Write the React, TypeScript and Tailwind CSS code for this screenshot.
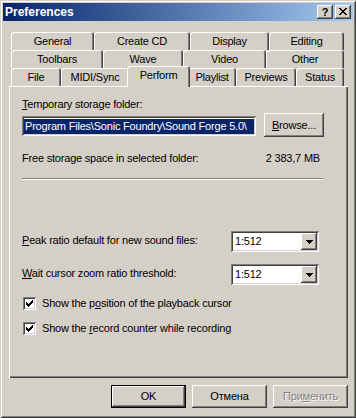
import type { ReactNode } from 'react'
import { clsx } from 'clsx'

// Classic Windows 2000 bevels
const RAISED =
  'bg-[#d4d0c8] shadow-[inset_-1px_-1px_#404040,inset_1px_1px_#ffffff,inset_-2px_-2px_#808080]'
const SUNKEN =
  'bg-white shadow-[inset_1px_1px_#808080,inset_-1px_-1px_#ffffff,inset_2px_2px_#404040,inset_-2px_-2px_#d4d0c8]'
const TAB_EDGE =
  'rounded-t-[3px] shadow-[inset_1px_1px_#ffffff,inset_-1px_0_#404040,inset_-2px_0_#808080]'

const TAB_ROWS = [
  [
    { label: 'General', w: 'w-[83px]' },
    { label: 'Create CD', w: 'w-[96px]' },
    { label: 'Display', w: 'w-[79px]' },
    { label: 'Editing', w: 'w-[75px]' },
  ],
  [
    { label: 'Toolbars', w: 'w-[92px]' },
    { label: 'Wave', w: 'w-[80px]' },
    { label: 'Video', w: 'w-[83px]' },
    { label: 'Other', w: 'w-[78px]' },
  ],
  [
    { label: 'File', w: 'w-[50px]' },
    { label: 'MIDI/Sync', w: 'w-[68px]' },
    { label: 'Perform', w: 'w-[63px]', active: true },
    { label: 'Playlist', w: 'w-[48px]' },
    { label: 'Previews', w: 'w-[60px]' },
    { label: 'Status', w: 'w-[48px]' },
  ],
]

// pixel glyphs, drawn 1px per cell
const pixelPath = (rows: string[]) =>
  rows
    .flatMap((row, y) =>
      row.split('').map((c, x) => (c === 'x' ? `M${x} ${y}h1v1h-1z` : '')),
    )
    .join('')

const CLOSE_GLYPH = ['xx....xx', '.xx..xx.', '..xxxx..', '...xx...', '..xxxx..', '.xx..xx.', 'xx....xx']
const CHECK_GLYPH = ['......x', '.....xx', 'x...xxx', 'xx.xxx.', 'xxxxx..', '.xxx...', '..x....']
const ARROW_GLYPH = ['xxxxxxx', '.xxxxx.', '..xxx..', '...x...']

const Pixels = ({ rows, className }: { rows: string[]; className?: string }) => (
  <svg
    width={rows[0].length}
    height={rows.length}
    viewBox={`0 0 ${rows[0].length} ${rows.length}`}
    shapeRendering="crispEdges"
    className={className}
  >
    <path d={pixelPath(rows)} fill="#000000" />
  </svg>
)

const U = ({ children }: { children: ReactNode }) => (
  <span className="underline underline-offset-[1px]">{children}</span>
)

const Combo = ({ value }: { value: string }) => (
  <div className={clsx(SUNKEN, 'mr-[5px] flex h-[21px] w-[88px] items-center p-[2px]')}>
    <span className="flex-1 pl-[2px] leading-[13px]">{value}</span>
    <div className={clsx(RAISED, 'flex h-[17px] w-[16px] items-center justify-center')}>
      <Pixels rows={ARROW_GLYPH} />
    </div>
  </div>
)

const Check = ({ children }: { children: ReactNode }) => (
  <div className="flex h-[13px] items-center gap-[6px] pl-[1px]">
    <div className={clsx(SUNKEN, 'flex h-[13px] w-[13px] items-center justify-center')}>
      <Pixels rows={CHECK_GLYPH} />
    </div>
    <span className="leading-[13px]">{children}</span>
  </div>
)

const DialogButton = ({
  children,
  isDefault,
  disabled,
  className = 'w-[75px]',
}: {
  children: ReactNode
  isDefault?: boolean
  disabled?: boolean
  className?: string
}) => (
  <div
    className={clsx(
      'flex h-[23px] items-center justify-center',
      className,
      isDefault
        ? 'bg-[#d4d0c8] shadow-[inset_0_0_0_1px_#000000,inset_-2px_-2px_#404040,inset_2px_2px_#ffffff,inset_-3px_-3px_#808080]'
        : RAISED,
      disabled && 'text-[#808080] [text-shadow:1px_1px_0_#ffffff]',
    )}
  >
    {children}
  </div>
)

export default function App() {
  return (
    <div className="flex h-[418px] w-[356px] flex-col bg-[#d4d0c8] p-[3px] font-['Liberation_Sans',Arial,sans-serif] text-[11px] tracking-[-0.2px] text-black shadow-[inset_1px_1px_#d4d0c8,inset_-1px_-1px_#404040,inset_2px_2px_#ffffff,inset_-2px_-2px_#808080]">
      {/* title bar */}
      <div className="flex h-[18px] items-center bg-gradient-to-r from-[#0a246a] to-[#a6caf0] pl-[2px] pr-[2px]">
        <span className="flex-1 text-[12px] font-bold leading-[14px] tracking-[0px] text-white">Preferences</span>
        <div className={clsx(RAISED, 'mr-[2px] flex h-[14px] w-[16px] items-center justify-center')}>
          <span className="text-[11px] font-bold leading-[11px] tracking-[0px]">?</span>
        </div>
        <div className={clsx(RAISED, 'flex h-[14px] w-[16px] items-center justify-center pb-[1px]')}>
          <Pixels rows={CLOSE_GLYPH} />
        </div>
      </div>

      <div className="ml-[6px] mt-[11px] flex w-[339px] flex-col">
        {/* tab strip */}
        <div className="ml-[2px] flex flex-col">
          {TAB_ROWS.map((row, i) => (
            <div key={i} className="flex h-[18px] items-start">
              {row.map((tab) =>
                tab.active ? (
                  <div
                    key={tab.label}
                    className={clsx(
                      TAB_EDGE,
                      tab.w,
                      'relative z-10 -mx-[2px] -mt-[2px] flex h-[21px] justify-center bg-[#d4d0c8] pt-[3px] leading-[13px]',
                    )}
                  >
                    {tab.label}
                  </div>
                ) : (
                  <div
                    key={tab.label}
                    className={clsx(TAB_EDGE, tab.w, 'flex h-[18px] items-center justify-center leading-[13px]')}
                  >
                    {tab.label}
                  </div>
                ),
              )}
            </div>
          ))}
        </div>

        {/* Perform page */}
        <div className="flex h-[292px] flex-col pl-[13px] pt-[12px] shadow-[inset_1px_1px_#ffffff,inset_-1px_-1px_#404040,inset_-2px_-2px_#808080]">
          <div className="flex w-[302px] flex-col">
            <span className="leading-[13px]">
              <U>T</U>emporary storage folder:
            </span>

            <div className="mt-[2px] flex h-[24px] items-center justify-between">
              <div className={clsx(SUNKEN, 'mt-[2px] flex h-[20px] w-[234px] items-center overflow-hidden px-[2px]')}>
                <span className="h-[15px] w-full whitespace-nowrap bg-[#0a246a] pl-[1px] leading-[15px] text-white">
                  Program Files\Sonic Foundry\Sound Forge 5.0\
                </span>
              </div>
              <DialogButton className="h-[24px] w-[60px]">
                <span>
                  <U>B</U>rowse...
                </span>
              </DialogButton>
            </div>

            <div className="mt-[15px] flex justify-between pr-[4px] leading-[13px]">
              <span>Free storage space in selected folder:</span>
              <span>2 383,7 MB</span>
            </div>

            <div className="mt-[13px] h-[2px] w-[301px] border-t border-b border-t-[#808080] border-b-white" />

            <div className="mt-[51px] flex items-center justify-between">
              <span className="-mt-[2px] leading-[13px]">
                <U>P</U>eak ratio default for new sound files:
              </span>
              <Combo value="1:512" />
            </div>

            <div className="mt-[12px] flex items-center justify-between">
              <span className="-mt-[2px] leading-[13px]">
                <U>W</U>ait cursor zoom ratio threshold:
              </span>
              <Combo value="1:512" />
            </div>

            <div className="mt-[12px] flex flex-col gap-[12px]">
              <Check>
                Show the p<U>o</U>sition of the playback cursor
              </Check>
              <Check>
                Show the <U>r</U>ecord counter while recording
              </Check>
            </div>
          </div>
        </div>

        {/* dialog buttons */}
        <div className="mt-[7px] flex justify-end gap-[6px]">
          <DialogButton isDefault>OK</DialogButton>
          <DialogButton>Отмена</DialogButton>
          <DialogButton disabled>
            <span>
              При<U>м</U>енить
            </span>
          </DialogButton>
        </div>
      </div>
    </div>
  )
}
